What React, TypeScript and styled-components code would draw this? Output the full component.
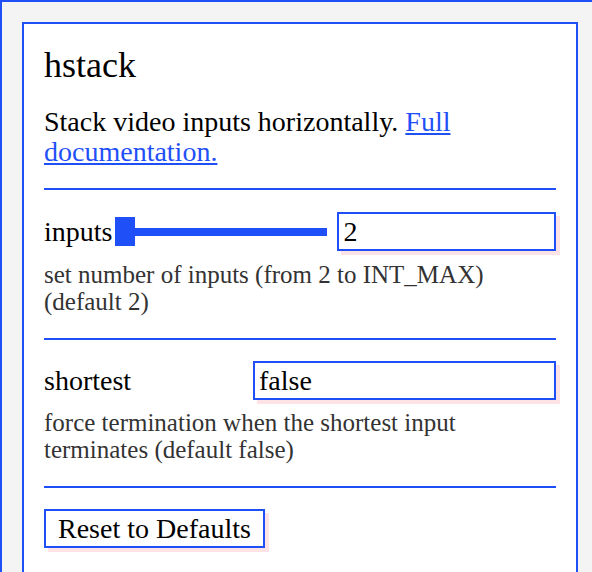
import React from "react";
import styled, { createGlobalStyle } from "styled-components";

const BLUE = "#1f50f7";
const PINK = "#fde3e5";

const Global = createGlobalStyle`
  html, body {
    margin: 0;
    padding: 0;
    overflow: hidden;
    background: #f4f4f4;
  }
  body {
    font-family: "Liberation Serif", "Times New Roman", serif;
    color: #000;
  }
`;

const Frame = styled.div`
  width: 600px;
  box-sizing: border-box;
  border: 2px solid ${BLUE};
  background: #f4f4f4;
  padding: 20px;
`;

const Card = styled.section`
  box-sizing: border-box;
  width: 556px;
  background: #fff;
  border: 2px solid ${BLUE};
  padding: 20px 20px 60px;
  display: flex;
  flex-direction: column;
`;

const Title = styled.h1`
  margin: 0;
  font-size: 36px;
  line-height: 42px;
  font-weight: 400;
`;

const Intro = styled.p`
  margin: 21px 0 0;
  font-size: 28px;
  line-height: 30px;
`;

const DocLink = styled.a`
  color: ${BLUE};
  text-decoration: underline;
`;

const Divider = styled.hr<{ $top?: number }>`
  margin: ${(p) => p.$top ?? 21}px 0 0;
  border: none;
  height: 2px;
  background: ${BLUE};
`;

const Row = styled.div<{ $top?: number }>`
  margin-top: ${(p) => p.$top ?? 22}px;
  display: flex;
  align-items: center;
  height: 39px;
`;

const Label = styled.label<{ $grow?: boolean }>`
  font-size: 28px;
  line-height: 32px;
  flex: ${(p) => (p.$grow ? "1 1 auto" : "0 0 auto")};
`;

const Slider = styled.input.attrs({ type: "range" })`
  -webkit-appearance: none;
  appearance: none;
  flex: 0 0 212px;
  width: 212px;
  height: 29px;
  margin: 0 10px 0 3px;
  padding: 0;
  background: transparent;
  &::-webkit-slider-runnable-track {
    height: 8px;
    background: ${BLUE};
    border: none;
  }
  &::-webkit-slider-thumb {
    -webkit-appearance: none;
    appearance: none;
    width: 20px;
    height: 29px;
    margin-top: -10.5px;
    background: ${BLUE};
    border: none;
    border-radius: 0;
  }
`;

const TextBox = styled.input<{ $width?: number }>`
  box-sizing: border-box;
  height: 39px;
  ${(p) => (p.$width ? `width: ${p.$width}px; flex: 0 0 auto;` : "flex: 1 1 auto; min-width: 0;")}
  margin: 0;
  padding: 0 5px 0 4px;
  border: 2px solid ${BLUE};
  border-radius: 0;
  background: #fff;
  box-shadow: 4px 4px 0 ${PINK};
  font-family: "Liberation Serif", "Times New Roman", serif;
  font-size: 28px;
  color: #000;
  outline: none;
`;

const Help = styled.p<{ $top?: number }>`
  margin: ${(p) => p.$top ?? 10}px 0 0;
  font-size: 25px;
  line-height: 27px;
  color: #333;
`;

const ResetButton = styled.button`
  align-self: flex-start;
  margin-top: 21px;
  box-sizing: border-box;
  height: 39px;
  padding: 0 12px 0 12px;
  border: 2px solid ${BLUE};
  border-radius: 0;
  background: #fff;
  box-shadow: 4px 4px 0 ${PINK};
  font-family: "Liberation Serif", "Times New Roman", serif;
  font-size: 28px;
  color: #000;
  cursor: pointer;
`;

export default function App() {
  return (
    <>
      <Global />
      <Frame>
        <Card>
          <Title>hstack</Title>
          <Intro>
            Stack video inputs horizontally.{" "}
            <DocLink href="#">Full documentation.</DocLink>
          </Intro>
          <Divider />
          <Row>
            <Label>inputs</Label>
            <Slider min={2} max={100} defaultValue={2} />
            <TextBox defaultValue="2" />
          </Row>
          <Help>set number of inputs (from 2 to INT_MAX) (default 2)</Help>
          <Divider $top={23} />
          <Row $top={21}>
            <Label $grow>shortest</Label>
            <TextBox $width={303} defaultValue="false" />
          </Row>
          <Help $top={9}>
            force termination when the shortest input terminates (default false)
          </Help>
          <Divider $top={23} />
          <ResetButton>Reset to Defaults</ResetButton>
        </Card>
      </Frame>
    </>
  );
}
